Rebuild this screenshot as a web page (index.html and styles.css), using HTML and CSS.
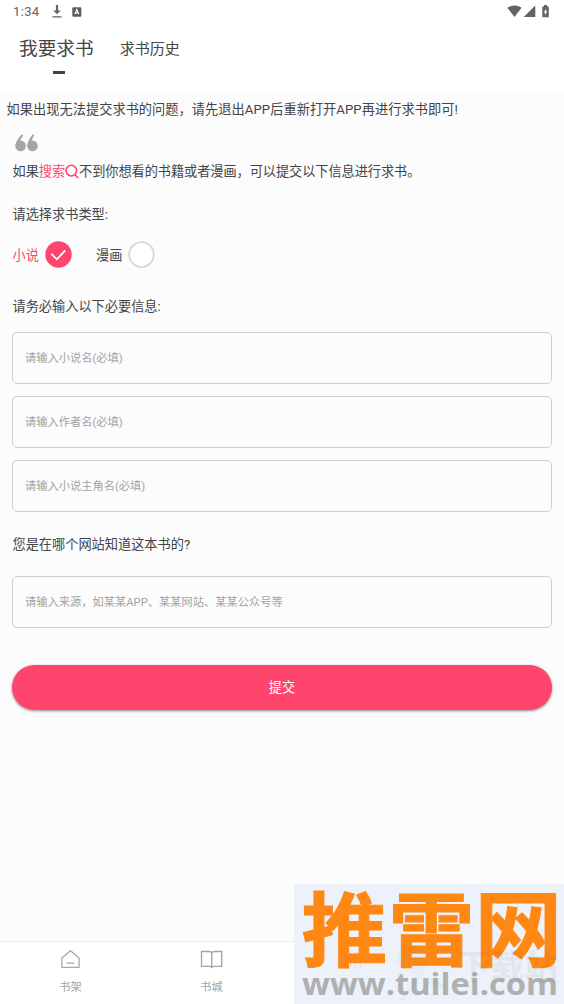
FILE: index.html
```html
<!DOCTYPE html>
<html lang="zh-CN">
<head>
<meta charset="utf-8">
<title>我要求书</title>
<link rel="stylesheet" href="styles.css">
</head>
<body>
<div class="screen">
  <div class="status">
    <span class="clock">1:34</span>
    <svg class="dl" width="10" height="13" viewBox="0 0 10 13"><path d="M3.9 0h2.2v5.5h2.6L5 9.2 1.3 5.500h2.6zM.4 11.300h9.200v1.300H.4z" fill="#636363"/></svg>
    <svg class="abox" width="10" height="10" viewBox="0 0 10 10"><rect x=".3" y=".2" width="9" height="9.600" rx="1" fill="#5c5c5c"/><path d="M2.800 7.300 4.800 2.500 6.800 7.300M3.600 5.900h2.400" fill="none" stroke="#fff" stroke-width="1.100"/></svg>
    <svg class="signals" width="44" height="14" viewBox="0 0 44 14"><path d="M.3 2.700Q7.500-1.500 14.600 2.700L7.500 12zM16.700 12 28.300 .6V12zM35.300 1.400h1.700V0h3v1.400h1.800V12.300h-6.500z" fill="#636363"/><path d="M39.300 3.400 36.700 7.400h1.500l-.5 3.200 2.700-4.300h-1.500z" fill="#fff"/></svg>
  </div>
  <div class="tabs">
    <div class="tab active">我要求书</div>
    <div class="tab">求书历史</div>
  </div>
  <main class="content">
    <p class="notice">如果出现无法提交求书的问题，请先退出APP后重新打开APP再进行求书即可!</p>
    <svg class="quote" width="24" height="18" viewBox="0 0 24 18" fill="#a3a5a7"><circle cx="5.600" cy="11.900" r="5.300"/><circle cx="17.500" cy="11.900" r="5.300"/><path d="M.3 11.500Q.8 6.500 6.800 .2L8.200 1 4.800 7 8 9zM12.200 11.500Q12.700 6.500 17.800 .2L19.200 1 16.500 7 20 9z"/></svg>
    <p class="hint">如果<span class="pink">搜索</span><svg class="search" width="14" height="15" viewBox="0 0 14 15" fill="none" stroke="#ff456d" stroke-width="1.500"><circle cx="6.300" cy="6.600" r="5.300"/><path d="M9.800 10.500 13.200 14"/></svg>不到你想看的书籍或者漫画，可以提交以下信息进行求书。</p>
    <h2 class="label type-label">请选择求书类型:</h2>
    <div class="radios">
      <span class="pink">小说</span>
      <svg class="radio" width="27" height="27" viewBox="0 0 28 28"><circle cx="14" cy="14" r="13.700" fill="#ff456d"/><path d="M6.500 13.400 12.300 19 21 9.800" fill="none" stroke="#fff" stroke-width="1.900"/></svg>
      <span class="comic">漫画</span>
      <svg class="radio" width="27" height="27" viewBox="0 0 28 28"><circle cx="14" cy="14" r="12.800" fill="#fff" stroke="#d8d8d8" stroke-width="1.900"/></svg>
    </div>
    <h2 class="label info-label">请务必输入以下必要信息:</h2>
    <div class="fields">
      <div class="field">请输入小说名(必填)</div>
      <div class="field">请输入作者名(必填)</div>
      <div class="field">请输入小说主角名(必填)</div>
    </div>
    <h2 class="label site-label">您是在哪个网站知道这本书的?</h2>
    <div class="field">请输入来源，如某某APP、某某网站、某某公众号等</div>
    <div class="submit">提交</div>
  </main>
  <nav class="nav">
    <div class="item">
      <svg width="22" height="22" viewBox="0 0 22 22" fill="none" stroke="#a9a9a9" stroke-width="1.300"><path d="M1.900 9 10.500 1.700 19.100 9V18.300H1.900zM6.700 14.200h7.600"/></svg>
      <span>书架</span>
    </div>
    <div class="item">
      <svg width="24" height="22" viewBox="0 0 24 22" fill="none" stroke="#a3a3a3" stroke-width="1.300"><path d="M1.500 2.500H9Q11.700 2.500 11.700 4.500 11.700 2.500 14.500 2.500H21.700V17.300H13.700Q11.700 17.300 11.700 19.300 11.700 17.300 9.700 17.300H1.500zM11.700 4V19"/></svg>
      <span>书城</span>
    </div>
    <div class="item"></div>
    <div class="item"></div>
  </nav>
  <svg class="watermark" width="270" height="120" viewBox="0 0 270 120">
    <rect width="270" height="120" fill="#edf2fa"/>
    <g class="brand">
      <text transform="translate(7.500 75.500) scale(1 .94)">推</text>
      <text transform="translate(94.500 75.500) scale(1 .94)">雷</text>
      <text transform="translate(180.500 75.500) scale(1.020 .97)">网</text>
    </g>
    <text class="domain" x="8" y="111" textLength="256" lengthAdjust="spacingAndGlyphs">www.tuilei.com</text>
    <g fill="none" stroke="#ff456d" opacity=".13"><path d="M50.500 68h6v6h-6zM50.500 78h6v6h-6zM60.500 78h6v6h-6z"/><circle cx="63.500" cy="71" r="3"/></g>
    <path d="M102 77Q106 58 121 62 137 67 132 83 127 96 112 114 108 120 104 116 119 105 121 90 105 86 102 77zM134 93Q148 94 151 105 141 98 132 103z" fill="#407860" opacity=".035"/>
    <text class="ghost" x="163" y="95" textLength="101" lengthAdjust="spacingAndGlyphs">下载站</text>
  </svg>
</div>
</body>
</html>
```
FILE: styles.css
```css
* { box-sizing: border-box; }
body { margin: 0; font-family: Roboto, "Noto Sans CJK SC", sans-serif; color: #434448; }
p, h2 { margin: 0; font-weight: 400; }
.screen { position: relative; width: 564px; height: 1004px; overflow: hidden; display: flex; flex-direction: column; background: #fcfcfc; }
.status { height: 24px; flex: none; display: flex; align-items: flex-start; background: #fff; padding: 5px 13px 0; }
.clock { width: 39px; font-size: 13px; line-height: 14px; color: #636363; letter-spacing: .35px; }
.abox { margin: 2px 0 0 10px; }
.signals { margin: 0 0 0 auto; }
.tabs { height: 70px; flex: none; background: #fff; display: flex; padding-left: 19px; gap: 26px; }
.tab { font-size: 15px; line-height: 50px; white-space: nowrap; }
.active { font-size: 18.700px; }
.active::after { content: ""; display: block; width: 12px; height: 3px; margin: -3px 0 0 34px; background: #434448; }
.content { flex: 1; padding: 0 12px; display: flex; flex-direction: column; font-size: 13.200px; }
.notice { margin: 6px -6px 0; padding-left: .5px; line-height: 20px; white-space: nowrap; letter-spacing: .05px; }
.quote { margin: 14px 0 0 3px; flex: none; }
.hint { line-height: 20px; margin-top: 10px; padding-left: .5px; height: 20px; white-space: nowrap; letter-spacing: -.06px; }
.search { vertical-align: -3px; }
.pink { color: #ff456d; }
.label { font-size: 13.200px; line-height: 20px; height: 20px; padding-left: .5px; }
.type-label { margin-top: 23px; }
.radios { display: flex; align-items: center; height: 27px; margin-top: 16px; padding-left: .6px; }
.radio { margin-left: 6px; }
.comic { margin-left: 24px; }
.info-label { margin-top: 29px; }
.fields { display: grid; gap: 12px; margin-top: 15px; }
.field { height: 52px; border: 1px solid #cecece; border-radius: 5px; padding: 1px 0 0 12px; line-height: 50px; font-size: 11.260px; color: #a3a3a3; }
.site-label { margin: 23px 0 21px; }
.submit { height: 45px; margin-top: 37px; border-radius: 23px; background: #ff456d; box-shadow: 0 1px 3px rgba(0, 0, 0, .45); color: #fff; text-align: center; line-height: 46px; }
.nav { height: 63px; flex: none; background: #fff; border-top: 1px solid #ebebeb; display: flex; }
.item { width: 141px; display: flex; flex-direction: column; align-items: center; padding-top: 7px; font-size: 11.200px; color: #a3a3a3; }
.item span { line-height: 16px; margin-top: 9px; }
.watermark { position: absolute; left: 294px; top: 884px; }
.brand { font: 700 86px "Noto Sans CJK SC", sans-serif; fill: #ff8814; stroke: #ff8814; stroke-width: 1px; }
.domain { font: 700 31px "Open Sans", sans-serif; fill: #afb0b0; }
.ghost { font: 700 34px "Noto Sans CJK SC", sans-serif; fill: #405060; opacity: .07; }
```
